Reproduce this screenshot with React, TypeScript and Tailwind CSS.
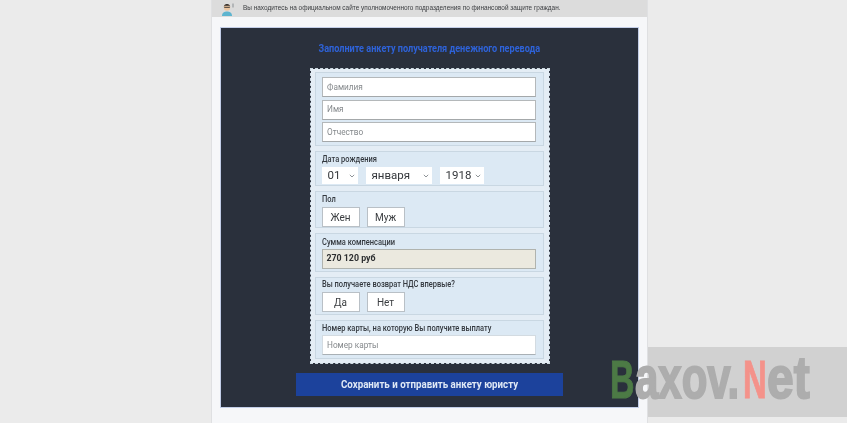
import React from "react";

function Section({ className, children }: { className: string; children: React.ReactNode }) {
  return <div className={"border border-[#c9d7e2] bg-[#dce9f4] px-[6px] " + className}>{children}</div>;
}

function Label({ children }: { children: React.ReactNode }) {
  return (
    <div className="text-[8.8px] font-medium leading-[11px] text-[#33383e] whitespace-nowrap">
      <span className="inline-block origin-left scale-x-[0.85]">{children}</span>
    </div>
  );
}

function TextBox({ text, className = "" }: { text: string; className?: string }) {
  return (
    <div className={"flex h-[20px] w-[214px] items-center border border-[#b4b8ba] border-b-[#a4a8aa] bg-white pl-[4px] text-[9.5px] text-[#85898c] " + className}>
      <span className="inline-block origin-left scale-x-[0.87]">{text}</span>
    </div>
  );
}

function Choice({ text }: { text: string }) {
  return (
    <div className="flex h-[20px] w-[38px] items-center justify-center border border-[#b9c0c6] bg-white text-[10px] text-[#3a3d40]">
      {text}
    </div>
  );
}

function Select({ text, width }: { text: string; width: string }) {
  return (
    <div className={"flex h-[17px] items-center justify-between bg-white pl-[6px] pr-[3px] text-[11.5px] text-[#33363a] " + width}>
      <span>{text}</span>
      <svg width="6" height="4" viewBox="0 0 6 4" fill="none" stroke="#8f9498" strokeWidth="1">
        <path d="M0.8 0.8 L3 3 L5.2 0.8" />
      </svg>
    </div>
  );
}

function Mark({ width, className, scale, children }: { width: string; className: string; scale: string; children: React.ReactNode }) {
  return (
    <div className={width + " shrink-0 " + className}>
      <span className={"inline-block origin-left " + scale}>{children}</span>
    </div>
  );
}

export default function App() {
  return (
    <div className="relative h-[423px] w-[847px] overflow-hidden bg-[#ebebeb] font-['Roboto',sans-serif] blur-[0.45px]">
      <div className="ml-[211px] h-[423px] w-[437px] border-x border-[#dfe0e2] bg-[#f6f7f9]">
        <div className="flex h-[17px] items-center bg-[#dcdcdc] pl-[9px]">
          <svg width="13" height="14" viewBox="0 0 13 14" className="shrink-0">
            <path d="M1 14 C1 10.5 3.5 9.5 6 9.5 C8.5 9.5 11 10.5 11 14 Z" fill="#5db4cf" />
            <circle cx="6" cy="5.5" r="3.2" fill="#edc6a0" />
            <path d="M2.8 5 C2.8 1 9.2 1 9.2 5 L8.4 3.8 L3.6 3.8 Z" fill="#2c2a28" />
            <rect x="3.2" y="4.8" width="5.6" height="1" fill="#3d3a36" />
            <rect x="11.5" y="1.5" width="1" height="4" fill="#8a8f94" />
          </svg>
          <span className="ml-[9px] inline-block origin-left scale-x-[0.908] whitespace-nowrap font-['Liberation_Sans',sans-serif] text-[7.1px] text-[#3b3d40]">
            Вы находитесь на официальном сайте уполномоченного подразделения по финансовой защите граждан.
          </span>
        </div>

        <div className="ml-[8px] mt-[10px] flex h-[381px] w-[419px] flex-col items-center border border-[#c3cee8] bg-[#2a303c] pt-[14px]">
          <div className="h-[13px] text-[10.4px] font-bold leading-[13px] text-[#2e62d8] whitespace-nowrap">
            <span className="inline-block scale-x-[0.877]">Заполните анкету получателя денежного перевода</span>
          </div>
          <div className="mt-[13px] flex h-[296px] w-[240px] flex-col gap-[5px] border border-dashed border-[#cfdbe4] bg-[#e4edf5] bg-clip-padding pl-[4px] pr-[5px] pt-[3px]">
            <Section className="h-[74px] pt-[4px]">
              <div className="flex flex-col gap-[2.5px]">
                <TextBox text="Фамилия" />
                <TextBox text="Имя" />
                <TextBox text="Отчество" />
              </div>
            </Section>
            <Section className="h-[35px] pt-[2px]">
              <Label>Дата рождения</Label>
              <div className="mt-[2px] flex gap-[8px]">
                <Select text="01" width="w-[36px]" />
                <Select text="января" width="w-[66px]" />
                <Select text="1918" width="w-[44px]" />
              </div>
            </Section>
            <Section className="h-[37px] pt-[2px]">
              <Label>Пол</Label>
              <div className="mt-[2px] flex gap-[7px]">
                <Choice text="Жен" />
                <Choice text="Муж" />
              </div>
            </Section>
            <Section className="h-[39px] pt-[3px]">
              <Label>Сумма компенсации</Label>
              <div className="mt-[1px] flex h-[20px] w-[214px] items-center border border-[#b0b3ae] bg-[#ebe9df] pl-[4px] text-[8.8px] font-bold text-[#2c2e30]">
                270 120 руб
              </div>
            </Section>
            <Section className="h-[38px] pt-[1px]">
              <Label>Вы получаете возврат НДС впервые?</Label>
              <div className="mt-[2px] flex gap-[7px]">
                <Choice text="Да" />
                <Choice text="Нет" />
              </div>
            </Section>
            <Section className="h-[39px] pt-[2px]">
              <Label>Номер карты, на которую Вы получите выплату</Label>
              <TextBox text="Номер карты" className="mt-[1px] border-[#d3dbe1] border-b-[#a9b0b5]" />
            </Section>
          </div>
          <div className="mt-[9px] flex h-[23px] w-[267px] items-center justify-center bg-[#1c429c] text-[10.4px] font-bold text-[#dfe8f5]">
            <span className="inline-block scale-x-[0.937]">Сохранить и отправить анкету юристу</span>
          </div>
        </div>
      </div>

      <div className="absolute left-[648px] top-[347px] h-[70px] w-[199px] bg-[#d1d1d1]" />
      <div className="absolute left-[610px] top-[348px] flex h-[60px] items-baseline whitespace-nowrap font-['Liberation_Sans',sans-serif] font-bold leading-[60px] text-[#adadad]">
        <Mark width="w-[25px]" className="text-[53px] text-[#4c7a45] [-webkit-text-stroke:1px_#4c7a45]" scale="scale-x-[0.64]">B</Mark>
        <Mark width="w-[108px]" className="text-[60px] [-webkit-text-stroke:2px_#adadad]" scale="scale-x-[0.7]">axov.</Mark>
        <Mark width="w-[24px]" className="text-[53px] text-[#f4928a] [-webkit-text-stroke:1px_#f4928a]" scale="scale-x-[0.62]">N</Mark>
        <Mark width="w-[44px]" className="text-[60px] [-webkit-text-stroke:2px_#adadad]" scale="scale-x-[0.8]">et</Mark>
      </div>
    </div>
  );
}
